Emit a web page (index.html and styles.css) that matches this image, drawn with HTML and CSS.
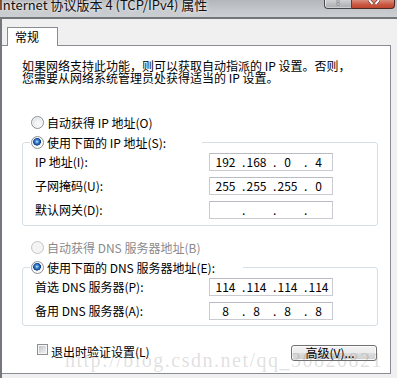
FILE: index.html
```html
<!DOCTYPE html>
<html lang="zh-CN">
<head>
<meta charset="utf-8">
<title>Internet 协议版本 4 (TCP/IPv4) 属性</title>
<link rel="stylesheet" href="styles.css">
</head>
<body>
<div class="titlebar">
  <span class="title">Internet 协议版本 4 (TCP/IPv4) 属性</span>
  <div class="caption">
    <span class="cbtn help"><svg width="26" height="8" viewBox="0 0 26 8"><rect x="12" y="0" width="2" height="2" fill="#fff" stroke="#555" stroke-width="0.5"/><rect x="12" y="3" width="2" height="2" fill="#fff" stroke="#555" stroke-width="0.5"/></svg></span>
    <span class="cbtn close"><svg width="42" height="8" viewBox="0 0 42 8"><path d="M17 0 L20.5 4 M27 0 L23.5 4" stroke="#5a2018" stroke-width="3.2" fill="none"/><path d="M17 0 L20.5 4 M27 0 L23.5 4" stroke="#fff" stroke-width="2" fill="none"/></svg></span>
  </div>
</div>
<div class="window">
  <div class="tabs"><div class="tab">常规</div></div>
  <div class="panel">
    <p class="desc">如果网络支持此功能，则可以获取自动指派的 IP 设置。否则，<br>您需要从网络系统管理员处获得适当的 IP 设置。</p>

    <div class="opt opt-ip"><span class="radio"></span>自动获得 IP 地址(O)</div>
    <fieldset class="group group-ip">
      <legend class="opt lg lg-ip"><span class="radio checked"></span>使用下面的 IP 地址(S):</legend>
      <div class="fields">
        <span class="lbl">IP 地址(I):</span>
        <div class="ipbox"><span class="seg"><i class="dot"></i><b class="num">192</b></span><span class="seg"><i class="dot">.</i><b class="num">168</b></span><span class="seg"><i class="dot">.</i><b class="num">0</b></span><span class="seg"><i class="dot">.</i><b class="num">4</b></span></div>
        <span class="lbl">子网掩码(U):</span>
        <div class="ipbox"><span class="seg"><i class="dot"></i><b class="num">255</b></span><span class="seg"><i class="dot">.</i><b class="num">255</b></span><span class="seg"><i class="dot">.</i><b class="num">255</b></span><span class="seg"><i class="dot">.</i><b class="num">0</b></span></div>
        <span class="lbl">默认网关(D):</span>
        <div class="ipbox"><span class="seg"><i class="dot"></i><b class="num"></b></span><span class="seg"><i class="dot">.</i><b class="num"></b></span><span class="seg"><i class="dot">.</i><b class="num"></b></span><span class="seg"><i class="dot">.</i><b class="num"></b></span></div>
      </div>
    </fieldset>

    <div class="opt opt-dns disabled"><span class="radio off"></span>自动获得 DNS 服务器地址(B)</div>
    <fieldset class="group group-dns">
      <legend class="opt lg lg-dns"><span class="radio checked"></span>使用下面的 DNS 服务器地址(E):</legend>
      <div class="fields">
        <span class="lbl">首选 DNS 服务器(P):</span>
        <div class="ipbox"><span class="seg"><i class="dot"></i><b class="num">114</b></span><span class="seg"><i class="dot">.</i><b class="num">114</b></span><span class="seg"><i class="dot">.</i><b class="num">114</b></span><span class="seg"><i class="dot">.</i><b class="num">114</b></span></div>
        <span class="lbl">备用 DNS 服务器(A):</span>
        <div class="ipbox"><span class="seg"><i class="dot"></i><b class="num">8</b></span><span class="seg"><i class="dot">.</i><b class="num">8</b></span><span class="seg"><i class="dot">.</i><b class="num">8</b></span><span class="seg"><i class="dot">.</i><b class="num">8</b></span></div>
      </div>
    </fieldset>

    <div class="bottom">
      <span class="check"><span class="checkbox"></span>退出时验证设置(L)</span>
      <span class="btn">高级(V)...</span>
    </div>
  </div>
</div>
<div class="watermark">http://blog.csdn.net/qq_30820821</div>
</body>
</html>
```

FILE: styles.css
```css
* { box-sizing: border-box; }

html, body {
  margin: 0;
  padding: 0;
}

body {
  width: 397px;
  height: 378px;
  overflow: hidden;
  position: relative;
  background: #f0f0f0;
  font-family: "Noto Sans CJK SC", "Noto Sans", sans-serif;
  font-size: 12px;
  color: #000;
}

/* ---------- title bar ---------- */
.titlebar {
  height: 19px;
  display: flex;
  align-items: flex-start;
  background: linear-gradient(180deg, #b3b6ba 0%, #c4c7cb 60%, #cdd0d3 100%);
  border-bottom: 2px solid #737679;
  overflow: hidden;
}

.title {
  margin-left: -1px;
  margin-top: -2px;
  font-size: 13px;
  line-height: 13px;
  white-space: nowrap;
  color: #111;
  text-shadow: 0 0 6px rgba(255,255,255,0.9), 0 0 3px rgba(255,255,255,0.8);
}

.caption {
  margin-left: auto;
  margin-right: 2px;
  display: flex;
}

.cbtn {
  display: block;
  height: 9px;
  border: 1px solid #45484d;
  border-top: none;
  overflow: hidden;
}

.cbtn svg { display: block; }

.help {
  width: 28px;
  border-radius: 0 0 0 4px;
  background: linear-gradient(180deg, #cfd1d4 0%, #a9acb0 100%);
  box-shadow: inset 1px 0 0 rgba(255,255,255,0.6), inset 0 -1px 0 rgba(255,255,255,0.4);
}

.close {
  width: 43px;
  border-left: none;
  border-color: #4d2a22;
  border-radius: 0 0 4px 0;
  background: linear-gradient(180deg, #d98c7c 0%, #c9553f 60%, #c04630 100%);
}

/* ---------- window body ---------- */
.window {
  border-left: 2px solid #74777b;
  height: 359px;
}

.tabs {
  padding-top: 8px;
  padding-left: 5px;
  display: flex;
}

.tab {
  position: relative;
  z-index: 1;
  width: 51px;
  height: 19px;
  margin-bottom: -1px;
  padding-left: 7px;
  border: 1px solid #898c95;
  border-bottom: none;
  background: #fff;
  line-height: 18px;
  font-size: 12px;
}

.panel {
  width: 389px;
  background: #fff;
  border-top: 1px solid #898c95;
  border-bottom: 1px solid #898c95;
  border-right: 1px solid #898c95;
  padding-bottom: 12px;
}

.desc {
  margin: 14px 0 0 20px;
  line-height: 12px;
  white-space: nowrap;
}

.opt {
  display: flex;
  align-items: center;
  height: 16px;
  white-space: nowrap;
}

.opt-ip {
  margin-top: 30px;
  padding-left: 29px;
}

.opt-dns {
  margin-top: 13px;
  padding-left: 29px;
}

.disabled { color: #8a8a8a; }

.radio {
  flex: none;
  width: 13px;
  height: 13px;
  margin-right: 3px;
  border-radius: 50%;
  border: 1px solid #8d9196;
  background: radial-gradient(circle at 58% 60%, #fafafa 0, #f1f2f3 35%, #d9dcdf 75%, #cfd2d6 100%);
  box-shadow: inset 0 0 0 1px rgba(255,255,255,0.7);
}

.radio.checked {
  background: radial-gradient(circle at 45% 42%, #cde9ff 0, #4d93dd 1.4px, #1e5cb0 2.8px, #0d3b7d 3.7px, #eef0f2 4.2px, #f7f7f7 5px, #d5d8dc 100%);
}

.radio.off {
  border-color: #c2c5c9;
  background: #f4f4f4;
  box-shadow: none;
}

/* ---------- group boxes ---------- */
.group {
  margin: 4px 0 0 20px;
  width: 356px;
  min-width: 0;
  padding: 3px 0 6px 0;
  border: 1px solid #d5dfe5;
  border-radius: 3px;
}

.group-dns { padding-bottom: 5px; }

.lg {
  margin-left: 7px;
  padding: 0 0 0 1px;
  display: flex;
}

.lg-ip { width: 172px; }
.lg-dns { width: 213px; }

.fields {
  display: grid;
  grid-template-columns: 174px 124px;
  row-gap: 6px;
  align-items: center;
  padding-left: 12px;
}

.lbl {
  white-space: nowrap;
  line-height: 16px;
}

.ipbox {
  height: 18px;
  border: 1px solid #c9cbd0;
  border-top-color: #b9bcc2;
  background: #fff;
  display: grid;
  grid-template-columns: repeat(4, 31px);
  align-items: center;
  line-height: 16px;
}

.seg {
  display: flex;
}

.seg::after {
  content: "";
  width: 5px;
  flex: none;
}

.dot {
  width: 5px;
  flex: none;
  font-style: normal;
  padding-left: 1px;
}

.num {
  flex: 1;
  text-align: center;
  font-weight: normal;
}

/* ---------- bottom row ---------- */
.bottom {
  margin-top: 19px;
  display: flex;
  align-items: flex-start;
  height: 16px;
}

.check {
  display: flex;
  align-items: flex-start;
  margin-left: 35px;
  margin-top: -1px;
  line-height: 16px;
  white-space: nowrap;
}

.checkbox {
  flex: none;
  width: 11px;
  height: 11px;
  margin-right: 3px;
  border: 1px solid #8e8f8f;
  background: linear-gradient(135deg, #b9bdc3 0%, #dfe1e4 60%, #f3f3f3 100%);
  box-shadow: inset 0 0 0 1px #f6f6f6;
}

.btn {
  margin-left: auto;
  margin-right: 13px;
  width: 86px;
  height: 16px;
  border: 1px solid #707070;
  border-radius: 3px;
  background: linear-gradient(180deg, #f3f3f3 0%, #ebebeb 48%, #dddddd 52%, #cfcfcf 100%);
  box-shadow: inset 0 0 0 1px rgba(255,255,255,0.8);
  display: flex;
  align-items: center;
  justify-content: center;
  line-height: 14px;
  padding-right: 8px;
  white-space: nowrap;
}

/* ---------- watermark overlay ---------- */
.watermark {
  position: absolute;
  left: 65px;
  top: 350px;
  font-family: "Liberation Serif", serif;
  font-size: 20px;
  line-height: 20px;
  letter-spacing: 1.5px;
  white-space: nowrap;
  color: rgba(120,120,120,0.24);
  pointer-events: none;
}
```
